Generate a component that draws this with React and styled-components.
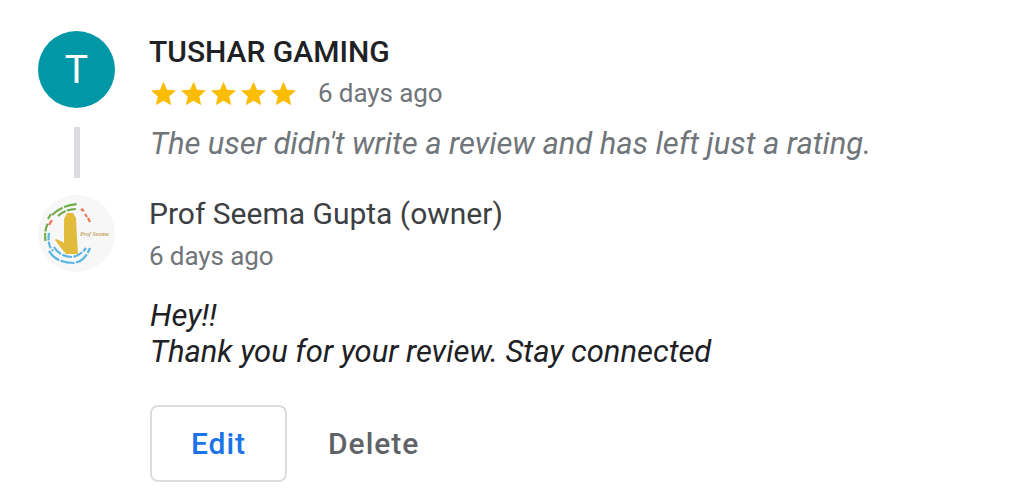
import React from 'react';
import styled, { createGlobalStyle } from 'styled-components';

const GlobalStyle = createGlobalStyle`
  html, body {
    margin: 0;
    background: #fff;
    overflow: hidden;
  }
  body {
    font-family: Roboto, "Liberation Sans", sans-serif;
  }
`;

const Page = styled.div`
  width: 1024px;
  height: 488px;
  padding: 31px 0 0 38px;
  box-sizing: border-box;
`;

const Entry = styled.section`
  display: grid;
  grid-template-columns: 77px 1fr;
  column-gap: 35px;
`;

const Side = styled.div`
  display: flex;
  flex-direction: column;
  align-items: center;
`;

const Avatar = styled.div`
  width: 77px;
  height: 77px;
  border-radius: 50%;
  display: flex;
  align-items: center;
  justify-content: center;
  background: ${(p) => p.$bg};
  color: #fff;
  font-size: 39px;
  overflow: hidden;
`;

const Connector = styled.div`
  width: 6px;
  height: 51px;
  margin: 19px 0 17px;
  background: #dadce0;
`;

const Content = styled.div`
  margin-left: -1px;
`;

const Name = styled.div`
  font-size: 30px;
  font-weight: 500;
  line-height: 42px;
  color: #202124;
`;

const MetaRow = styled.div`
  display: flex;
  align-items: center;
  height: 36px;
  margin-top: 2px;
`;

const Stars = styled.div`
  display: flex;
  gap: 5px;
  margin: 0 22px 0 2px;
`;

const Muted = styled.div`
  font-size: 26px;
  line-height: 36px;
  letter-spacing: -0.1px;
  color: #70757a;
`;

const ReviewText = styled.p`
  margin: 15px 0 0 1px;
  font-size: 31px;
  font-style: italic;
  line-height: 36px;
  letter-spacing: -0.05px;
  color: #70757a;
`;

const OwnerName = styled.div`
  font-size: 30px;
  line-height: 38px;
  color: #3c4043;
`;

const OwnerDate = styled(Muted)`
  margin-top: 5px;
`;

const ReplyText = styled.p`
  margin: 24px 0 0 1px;
  font-size: 31px;
  font-style: italic;
  line-height: 36px;
  letter-spacing: -0.03px;
  color: #202124;
`;

const Actions = styled.div`
  display: flex;
  align-items: center;
  margin-top: 35px;
`;

const Button = styled.button`
  height: 77px;
  padding: 0;
  border-radius: 8px;
  background: #fff;
  font-family: inherit;
  font-size: 30px;
  font-weight: 500;
  letter-spacing: 1px;
  cursor: pointer;
`;

const EditButton = styled(Button)`
  width: 137px;
  margin-left: 1px;
  border: 2px solid #dadce0;
  color: #1a73e8;
`;

const DeleteButton = styled(Button)`
  margin-left: 41px;
  border: none;
  color: #5f6368;
`;

const Star = () => (
  <svg width="25" height="25" viewBox="0 0 24 24">
    <path fill="#fbbc04" d="M12 .6l3.4 7.9 8.6.7-6.5 5.7 1.9 8.4L12 18.9l-7.4 4.4 1.9-8.4L0 9.2l8.6-.7z" />
  </svg>
);

const ProfLogo = () => (
  <svg width="77" height="77" viewBox="0 0 77 77">
    <circle cx="38.500" cy="38.500" r="38.500" fill="#f7f7f7" />
    <g fill="none" strokeWidth="2.200" style={{ filter: 'blur(0.5px)' }}>
      <path stroke="#72ad4c" d="M14 20Q24 10 40 9" strokeDasharray="13 1.500" />
      <path stroke="#72ad4c" d="M20 21Q28 14 38 14" strokeDasharray="9 1.500" />
      <path stroke="#72ad4c" d="M7.500 46Q6 36 10 28" strokeDasharray="8 1.500" />
      <path stroke="#72ad4c" d="M10 24L13 19" />
      <path stroke="#ef7350" d="M43 14l3 2M47 19l2 3M50 23l2 4M11 30l3-5" />
      <path stroke="#5ab5e3" d="M11 38Q9 50 15 56" strokeDasharray="7 1.500" />
      <path stroke="#5ab5e3" d="M11 56Q18 68 36 68Q47 66 52 53" strokeDasharray="14 1.500" />
      <path stroke="#5ab5e3" d="M16 52Q22 62 35 62Q43 60 48 53" strokeDasharray="10 1.500" />
    </g>
    <path
      fill="#e3bb3c"
      style={{ filter: 'blur(0.4px)' }}
      d="M26 24l3-6h6l3 5 1 20 1 16H28l-5-6-6-8 1-1 7 3 1 1z"
    />
    <text x="42" y="41" fontFamily="Liberation Serif, serif" fontStyle="italic" fontWeight="700" fontSize="6" fill="#c4a862">
      Prof Seema
    </text>
  </svg>
);

const App = () => (
  <>
    <GlobalStyle />
    <Page>
      <Entry>
        <Side>
          <Avatar $bg="#0097a7">T</Avatar>
          <Connector />
        </Side>
        <Content>
          <Name>TUSHAR GAMING</Name>
          <MetaRow>
            <Stars>
              {[0, 1, 2, 3, 4].map((i) => (
                <Star key={i} />
              ))}
            </Stars>
            <Muted>6 days ago</Muted>
          </MetaRow>
          <ReviewText>The user didn't write a review and has left just a rating.</ReviewText>
        </Content>
      </Entry>
      <Entry>
        <Side>
          <Avatar $bg="#f7f7f7">
            <ProfLogo />
          </Avatar>
        </Side>
        <Content>
          <OwnerName>Prof Seema Gupta (owner)</OwnerName>
          <OwnerDate>6 days ago</OwnerDate>
          <ReplyText>
            Hey!!
            <br />
            Thank you for your review. Stay connected
          </ReplyText>
          <Actions>
            <EditButton>Edit</EditButton>
            <DeleteButton>Delete</DeleteButton>
          </Actions>
        </Content>
      </Entry>
    </Page>
  </>
);

export default App;
